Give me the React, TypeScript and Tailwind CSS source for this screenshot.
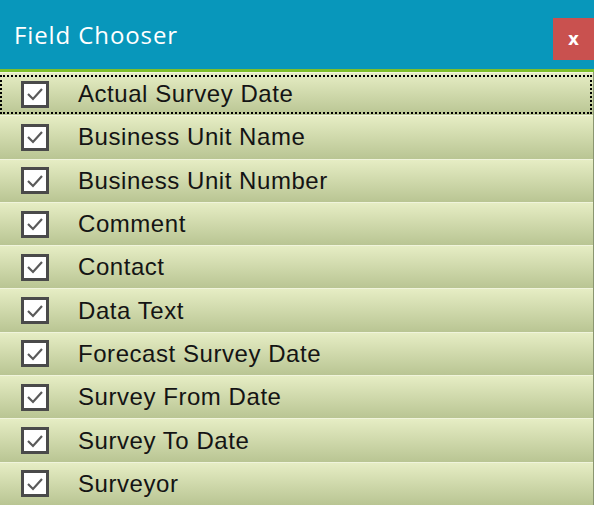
import React from "react";

const fields = [
  "Actual Survey Date",
  "Business Unit Name",
  "Business Unit Number",
  "Comment",
  "Contact",
  "Data Text",
  "Forecast Survey Date",
  "Survey From Date",
  "Survey To Date",
  "Surveyor",
];

function Check() {
  return (
    <div className="w-[28px] h-[27px] border-[3px] border-[#4a4a4a] bg-white flex items-center justify-center">
      <svg width="20" height="16" viewBox="0 0 20 16">
        <path d="M3 8 L8 13 L17 3" fill="none" stroke="#5a5a5a" strokeWidth="2.2" />
      </svg>
    </div>
  );
}

export default function App() {
  return (
    <div className="w-[594px] h-[505px] overflow-hidden flex flex-col bg-[#c4cfa0]">
      <div className="h-[69px] bg-[#0897bb] flex items-start justify-between shrink-0">
        <div
          className="text-white text-[24px] tracking-[0.9px] pl-[14px] pt-[19px] leading-[32px]"
          style={{ fontFamily: '"Open Sans", sans-serif' }}
        >
          Field Chooser
        </div>
        <div className="mt-[18px] w-[41px] h-[42px] bg-[#c9514f] flex items-center justify-center text-white font-bold text-[17px] leading-none"
          style={{ fontFamily: '"DejaVu Sans", sans-serif' }}>
          x
        </div>
      </div>
      <div className="h-[3px] bg-[#7fbf2a] shrink-0" />
      <div className="flex flex-col border-r border-[#8a9670]">
        {fields.map((f, i) => (
          <div
            key={f}
            className="relative h-[43.3px] flex items-center bg-gradient-to-b from-[#e6edc4] to-[#b9c593] border-t border-[#f0f4dc] shrink-0"
          >
            <div className="w-[70px] flex justify-center">
              <Check />
            </div>
            <div
              className="text-[#141414] text-[24px] tracking-[0.55px] pl-[8px]"
              style={{ fontFamily: '"Liberation Sans", Arial, sans-serif' }}
            >
              {f}
            </div>
            {i === 0 && (
              <div className="absolute left-0 right-[1px] top-[2px] bottom-[1px] border-2 border-dotted border-black pointer-events-none" />
            )}
          </div>
        ))}
      </div>
    </div>
  );
}
